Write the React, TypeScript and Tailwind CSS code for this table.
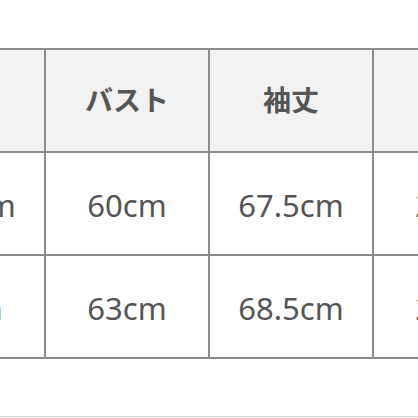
const rows = [
  ['着丈', 'バスト', '袖丈', '肩幅'],
  ['65.5cm', '60cm', '67.5cm', '21cm'],
  ['68cm', '63cm', '68.5cm', '21cm'],
];

export default function App() {
  return (
    <div
      className="w-[418px] h-[418px] overflow-hidden bg-white text-[#555]"
      style={{ fontFamily: '"Noto Sans", "Noto Sans CJK JP", sans-serif' }}
    >
      <div className="h-[48px]" />
      <div className="ml-[-118px] w-[660px] border-t-2 border-[#8c8c8c]">
        {rows.map((row, i) => (
          <div key={i} className={i === 0 ? 'flex bg-[#f2f2f2]' : 'flex bg-white'}>
            {row.map((cell, j) => (
              <div
                key={j}
                className={
                  i === 0
                    ? 'w-[164px] h-[103px] shrink-0 flex items-center justify-center pb-[4px] border-r-2 border-b-2 border-[#8c8c8c]'
                    : 'w-[164px] h-[103px] shrink-0 flex items-center justify-center pt-[3px] border-r-2 border-b-2 border-[#8c8c8c]'
                }
              >
                {i === 0 ? (
                  <span className="text-[28px] font-bold" style={{ fontFamily: '"Noto Sans CJK JP", sans-serif' }}>
                    {cell}
                  </span>
                ) : (
                  <span className="text-[31px]">{cell}</span>
                )}
              </div>
            ))}
          </div>
        ))}
      </div>
      <div className="h-[58px] border-b border-[#d4d4d4]" />
    </div>
  );
}
